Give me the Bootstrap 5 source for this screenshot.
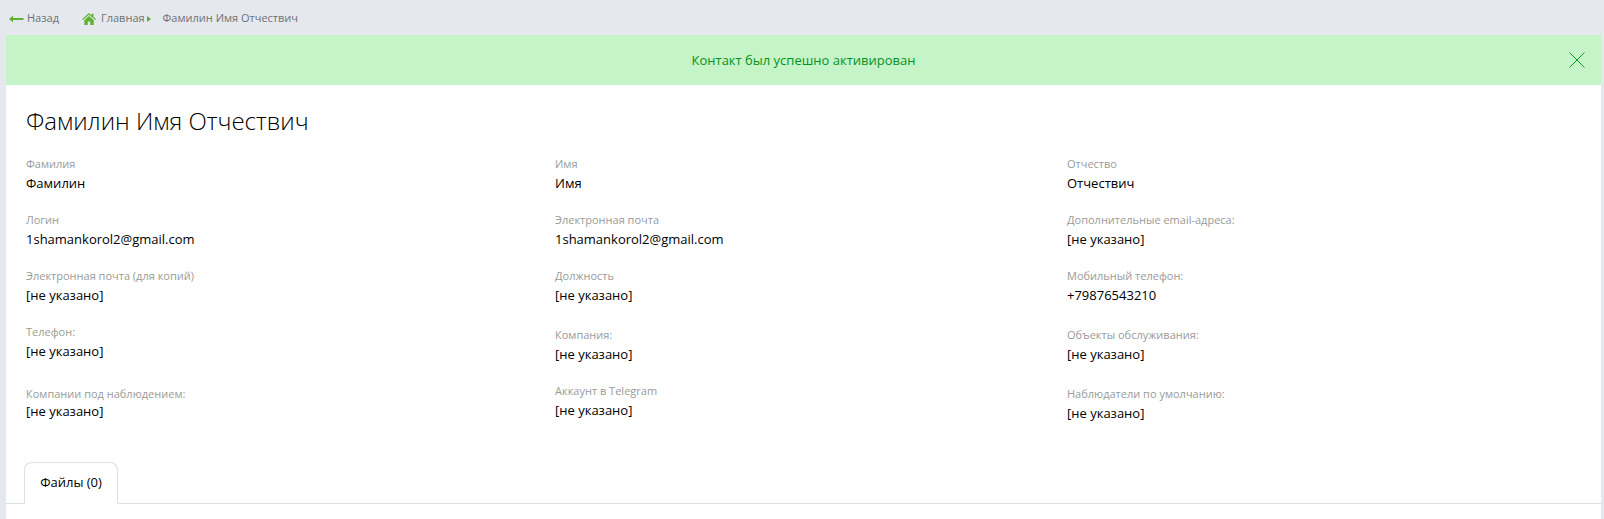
<!DOCTYPE html>
<html lang="ru">
<head>
    <meta charset="UTF-8">
    <title>Фамилин Имя Отчествич</title>
    <link href="https://cdn.jsdelivr.net/npm/bootstrap@5.3.0/dist/css/bootstrap.min.css" rel="stylesheet">
    <style>
        html, body { height: 100%; overflow: hidden; }
        body {
            background-color: #e5e8ed;
            font-family: "Open Sans", "Noto Sans", sans-serif;
            font-size: 13px;
            color: #000;
        }
        .top-bar { height: 35px; padding: 2px 0 0 9px; font-size: 11px; color: #6f7276; }
        .top-bar a { color: #6f7276; text-decoration: none; }
        .back-link { margin-right: 19px; gap: 3px; }
        .home-icon { margin-right: 5px; }
        .crumb-sep { margin: 0 12px 0 2px; }
        .page-panel { margin: 0 3px 0 6px; background: #fff; height: calc(100% - 35px); }
        .notice-bar { height: 50px; padding-top: 1px; background: #c4f4c8; color: #08921b; font-size: 13px; }
        .notice-close { right: 16px; top: 17px; padding: 0; border: 0; background: none; line-height: 0; }
        .contact-title { font-weight: 300; font-size: 24px; line-height: 32px; margin: 0; padding: 20px 0 0 20px; }
        .info-grid { padding: 19px 0 0 20px; }
        .info-col { flex: 0 0 529px; }
        .info-col + .info-col { flex-basis: 512px; }
        .field-label { font-size: 11px; line-height: 15px; color: #9a9a9a; }
        .field-value { line-height: 18px; margin-top: 3px; }
        .field-item { height: 56px; }
        .field-item.tall { height: 59px; }
        .field-item.taller { height: 62px; }
        .field-item.close-value .field-value { margin-top: 1px; }
        .tabs-row { margin-top: 20px; padding-left: 18px; border-bottom: 1px solid #dcdfe6; height: 42px; }
        .file-tab {
            width: 94px; height: 42px; border: 1px solid #dcdfe6; border-bottom-color: #fff;
            border-radius: 8px 8px 0 0; background: #fff; font-size: 13px;
        }
    </style>
</head>
<body>

<!-- верхняя панель -->
<div class="top-bar d-flex align-items-center">
    <a href="#" class="back-link d-flex align-items-center">
        <svg width="15" height="8" viewBox="0 0 15 8"><path d="M0 4 4 .8V3h10.5v2H4v2.2z" fill="#5cb230"/></svg>
        <span>Назад</span>
    </a>
    <a href="#" class="d-flex align-items-center ms-1">
        <svg width="14" height="12" viewBox="0 0 14 12" class="home-icon"><path d="M7 0 0 6.2l.8.9L7 1.7l6.2 5.4.8-.9L11.5 4V.8H9.7v1.6zM2.3 7.2V12h3.4V8.5h2.6V12h3.4V7.2L7 3z" fill="#5cb230"/></svg>
        <span>Главная</span>
    </a>
    <svg width="4" height="6" viewBox="0 0 4 6" class="crumb-sep"><path d="M0 0 4 3 0 6z" fill="#5cb230"/></svg>
    <span>Фамилин Имя Отчествич</span>
</div>

<div class="page-panel">
    <!-- уведомление -->
    <div class="notice-bar position-relative d-flex align-items-center justify-content-center">
        <span>Контакт был успешно активирован</span>
        <button class="notice-close position-absolute" type="button" aria-label="Закрыть">
            <svg width="16" height="16" viewBox="0 0 16 16"><path d="M.5.5l15 15M15.5.5l-15 15" stroke="#0a9a1e" stroke-width="1" fill="none"/></svg>
        </button>
    </div>

    <h1 class="contact-title">Фамилин Имя Отчествич</h1>

    <div class="info-grid d-flex">
        <div class="info-col">
            <div class="field-item"><div class="field-label">Фамилия</div><div class="field-value">Фамилин</div></div>
            <div class="field-item"><div class="field-label">Логин</div><div class="field-value">1shamankorol2@gmail.com</div></div>
            <div class="field-item"><div class="field-label">Электронная почта (для копий)</div><div class="field-value">[не указано]</div></div>
            <div class="field-item taller"><div class="field-label">Телефон:</div><div class="field-value">[не указано]</div></div>
            <div class="field-item close-value"><div class="field-label">Компании под наблюдением:</div><div class="field-value">[не указано]</div></div>
        </div>
        <div class="info-col">
            <div class="field-item"><div class="field-label">Имя</div><div class="field-value">Имя</div></div>
            <div class="field-item"><div class="field-label">Электронная почта</div><div class="field-value">1shamankorol2@gmail.com</div></div>
            <div class="field-item tall"><div class="field-label">Должность</div><div class="field-value">[не указано]</div></div>
            <div class="field-item"><div class="field-label">Компания:</div><div class="field-value">[не указано]</div></div>
            <div class="field-item"><div class="field-label">Аккаунт в Telegram</div><div class="field-value">[не указано]</div></div>
        </div>
        <div class="info-col">
            <div class="field-item"><div class="field-label">Отчество</div><div class="field-value">Отчествич</div></div>
            <div class="field-item"><div class="field-label">Дополнительные email-адреса:</div><div class="field-value">[не указано]</div></div>
            <div class="field-item tall"><div class="field-label">Мобильный телефон:</div><div class="field-value">+79876543210</div></div>
            <div class="field-item tall"><div class="field-label">Объекты обслуживания:</div><div class="field-value">[не указано]</div></div>
            <div class="field-item"><div class="field-label">Наблюдатели по умолчанию:</div><div class="field-value">[не указано]</div></div>
        </div>
    </div>

    <div class="tabs-row d-flex">
        <div class="file-tab d-flex align-items-center justify-content-center">Файлы (0)</div>
    </div>
</div>

<script src="https://cdn.jsdelivr.net/npm/bootstrap@5.3.0/dist/js/bootstrap.bundle.min.js"></script>
</body>
</html>
